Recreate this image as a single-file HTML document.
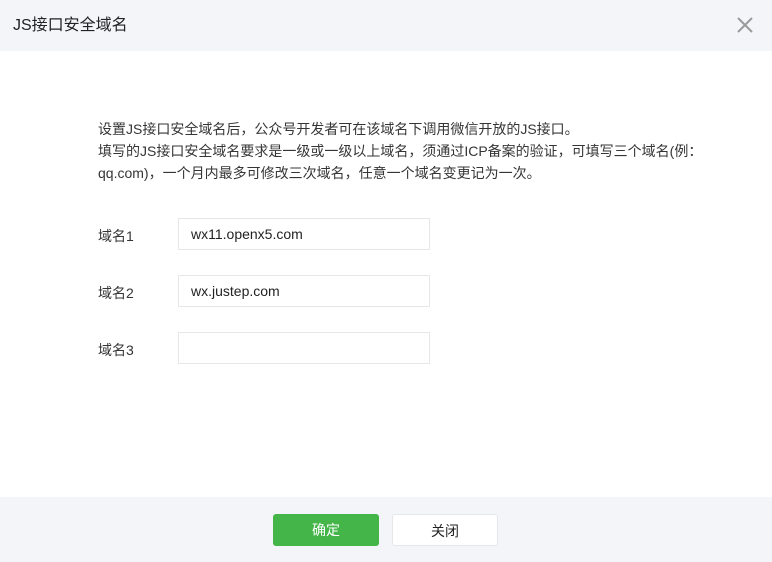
<!DOCTYPE html>
<html><head><meta charset="utf-8"><style>
*{margin:0;padding:0;box-sizing:border-box}
body{width:772px;height:562px;background:#fff;font-family:"Liberation Sans","Noto Sans CJK SC",sans-serif;color:#353535;position:relative;overflow:hidden}
.hd{position:absolute;left:0;top:0;width:772px;height:51px;background:#f4f5f9;font-size:16px;line-height:51px;padding-left:13px;color:#222}
.x{position:absolute;right:18px;top:16px;width:18px;height:18px}
.desc{position:absolute;left:98px;top:118px;font-size:14px;line-height:22px;color:#353535}
.lab{position:absolute;left:98px;font-size:14px}
.in{position:absolute;left:178px;width:252px;height:32px;border:1px solid #e4e8eb;font-size:14px;line-height:30px;padding-left:12px;color:#222}
.ft{position:absolute;left:0;top:497px;width:772px;height:65px;background:#f4f5f9}
.b{position:absolute;top:514px;width:106px;height:32px;border-radius:3px;font-size:14px;line-height:32px;text-align:center}
</style></head><body>
<div class="hd">JS接口安全域名</div>
<svg class="x" viewBox="0 0 18 18"><path d="M2 2L16 16M16 2L2 16" stroke="#9a9a9a" stroke-width="2"/></svg>
<div class="desc">设置JS接口安全域名后，公众号开发者可在该域名下调用微信开放的JS接口。<br>填写的JS接口安全域名要求是一级或一级以上域名，须通过ICP备案的验证，可填写三个域名(例：<br>qq.com)，一个月内最多可修改三次域名，任意一个域名变更记为一次。</div>
<div class="lab" style="top:226px">域名1</div><div class="in" style="top:218px">wx11.openx5.com</div>
<div class="lab" style="top:283px">域名2</div><div class="in" style="top:275px">wx.justep.com</div>
<div class="lab" style="top:340px">域名3</div><div class="in" style="top:332px"></div>
<div class="ft"></div>
<div class="b" style="left:273px;background:#44b549;color:#fff">确定</div>
<div class="b" style="left:392px;background:#fff;border:1px solid #e4e8eb;color:#222">关闭</div>
</body></html>
